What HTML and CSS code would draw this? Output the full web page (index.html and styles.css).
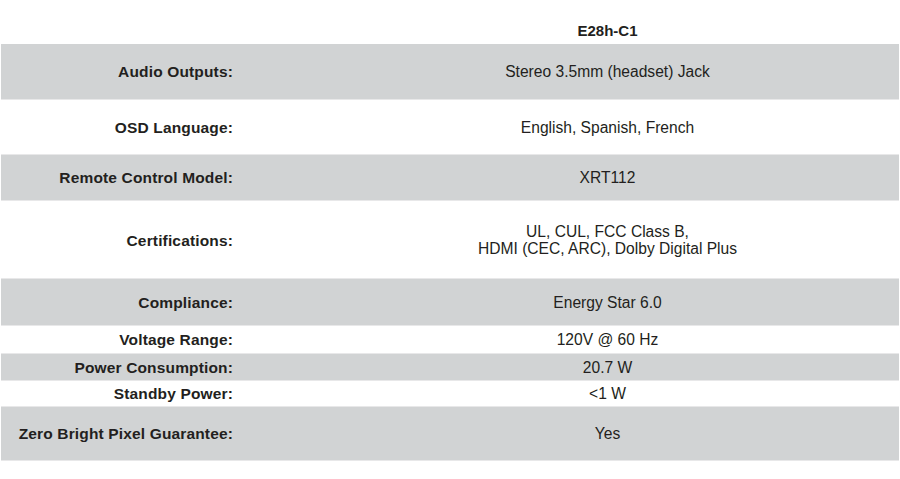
FILE: index.html
```html
<!DOCTYPE html>
<html>
<head>
<meta charset="utf-8">
<link rel="stylesheet" href="styles.css">
</head>
<body>
<div class="specs">
  <div class="row head"><div class="label"></div><div class="value">E28h-C1</div></div>
  <div class="row gray p19"><div class="label">Audio Outputs:</div><div class="value">Stereo 3.5mm (headset) Jack</div></div>
  <div class="row p19b"><div class="label">OSD Language:</div><div class="value">English, Spanish, French</div></div>
  <div class="row gray p14"><div class="label">Remote Control Model:</div><div class="value">XRT112</div></div>
  <div class="row p22"><div class="label">Certifications:</div><div class="value">UL, CUL, FCC Class B,<br>HDMI (CEC, ARC), Dolby Digital Plus</div></div>
  <div class="row gray p15"><div class="label">Compliance:</div><div class="value">Energy Star 6.0</div></div>
  <div class="row p5"><div class="label">Voltage Range:</div><div class="value">120V @ 60 Hz</div></div>
  <div class="row gray p5b"><div class="label">Power Consumption:</div><div class="value">20.7 W</div></div>
  <div class="row p4"><div class="label">Standby Power:</div><div class="value">&lt;1 W</div></div>
  <div class="row gray p18"><div class="label">Zero Bright Pixel Guarantee:</div><div class="value">Yes</div></div>
</div>
</body>
</html>
```
FILE: styles.css
```css
html, body {
  margin: 0;
  padding: 0;
  background: #ffffff;
}
body {
  font-family: "Liberation Sans", Arial, sans-serif;
  color: #231f20;
}
.specs {
  display: flex;
  flex-direction: column;
  padding: 0 1px;
}
.row {
  display: grid;
  grid-template-columns: 315px 1fr;
  align-items: center;
  line-height: 17px;
  border-bottom: 1px solid #e8e8e9;
}
.row.head {
  padding: 22px 0 5px;
  border-bottom: 0;
}
.row.head .value {
  font-weight: bold;
  font-size: 15px;
}
.gray {
  background: #d1d3d4;
}
.label {
  text-align: right;
  padding-right: 83px;
  font-weight: bold;
  font-size: 15.5px;
  letter-spacing: 0.15px;
}
.value {
  text-align: center;
  font-size: 15.6px;
}
.p19 { padding: 19px 0 19px; }
.p19b { padding: 19px 0 18px; }
.p14 { padding: 14px 0 14px; }
.p22 { padding: 22px 0 21px; }
.p15 { padding: 15px 0 14px; }
.p5 { padding: 5px 0 5px; }
.p5b { padding: 5px 0 4px; }
.p4 { padding: 4px 0 4px; }
.p18 { padding: 18px 0 18px; }
```
